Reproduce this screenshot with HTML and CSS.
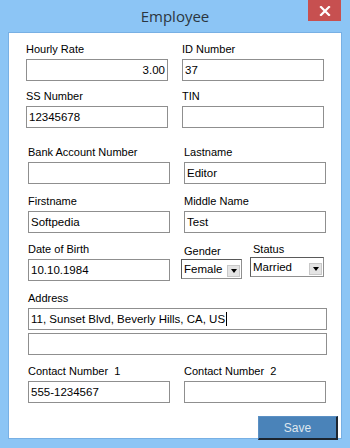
FILE: index.html
```html
<!DOCTYPE html>
<html lang="en">
<head>
    <meta charset="UTF-8">
    <meta name="viewport" content="width=device-width, initial-scale=1.0">
    <title>Employee</title>
    <link rel="stylesheet" href="styles.css">
</head>
<body>

    <div class="window">
        <div class="titlebar">
            <span></span>
            <span class="title">Employee</span>
            <button class="close-btn" aria-label="Close">
                <svg width="12" height="10" viewBox="0 0 12 10">
                    <path d="M2 1 L10 9 M10 1 L2 9" stroke="#fff" stroke-width="2.2" stroke-linecap="square"/>
                </svg>
            </button>
        </div>

        <div class="client">
            <div class="row sec-a r1">
                <div class="field">
                    <label>Hourly Rate</label>
                    <div class="input right">3.00</div>
                </div>
                <div class="field">
                    <label>ID Number</label>
                    <div class="input">37</div>
                </div>
            </div>

            <div class="row sec-a r2">
                <div class="field">
                    <label>SS Number</label>
                    <div class="input">12345678</div>
                </div>
                <div class="field">
                    <label>TIN</label>
                    <div class="input"></div>
                </div>
            </div>

            <div class="row sec-b r3">
                <div class="field">
                    <label>Bank Account Number</label>
                    <div class="input"></div>
                </div>
                <div class="field">
                    <label>Lastname</label>
                    <div class="input">Editor</div>
                </div>
            </div>

            <div class="row sec-b r4">
                <div class="field">
                    <label>Firstname</label>
                    <div class="input">Softpedia</div>
                </div>
                <div class="field">
                    <label>Middle Name</label>
                    <div class="input">Test</div>
                </div>
            </div>

            <div class="row sec-b r5">
                <div class="field">
                    <label>Date of Birth</label>
                    <div class="input">10.10.1984</div>
                </div>
                <div class="combos">
                    <div class="field combo-field gender">
                        <label>Gender</label>
                        <div class="combo"><span>Female</span><i class="arrow"></i></div>
                    </div>
                    <div class="field combo-field status">
                        <label>Status</label>
                        <div class="combo"><span>Married</span><i class="arrow"></i></div>
                    </div>
                </div>
            </div>

            <div class="sec-b address">
                <div class="field">
                    <label>Address</label>
                    <div class="input">11, Sunset Blvd, Beverly Hills, CA, US<span class="caret"></span></div>
                    <div class="input second"></div>
                </div>
            </div>

            <div class="row sec-b r6">
                <div class="field">
                    <label>Contact Number&nbsp; 1</label>
                    <div class="input">555-1234567</div>
                </div>
                <div class="field">
                    <label>Contact Number&nbsp; 2</label>
                    <div class="input"></div>
                </div>
            </div>

            <div class="actions">
                <button class="save-btn">Save</button>
            </div>
        </div>
    </div>

</body>
</html>
```

FILE: styles.css
```css
html, body {
    margin: 0;
    padding: 0;
}
body {
    font-family: "Liberation Sans", Arial, sans-serif;
    background: #8cc5f5;
    width: 350px;
    height: 448px;
    overflow: hidden;
}
.window {
    width: 350px;
    height: 448px;
    background: #8cc5f5;
}
.titlebar {
    height: 32px;
    display: grid;
    grid-template-columns: 1fr auto 1fr;
    align-items: start;
}
.title {
    font-family: "Open Sans", "Noto Sans", sans-serif;
    font-size: 15px;
    color: #2b3640;
    line-height: 20px;
    margin-top: 6px;
}
.close-btn {
    justify-self: end;
    width: 33px;
    height: 21px;
    margin-right: 9px;
    padding: 0;
    border: none;
    background: #c75050;
    display: flex;
    align-items: center;
    justify-content: center;
}
.client {
    margin: 0 8px 0 8px;
    height: 407px;
    box-sizing: border-box;
    background: #fff;
    border: 1px solid #78b0e4;
    padding-top: 9px;
}
.row {
    display: grid;
    grid-template-columns: 142px 142px;
    column-gap: 14px;
}
.sec-a { padding-left: 17px; }
.sec-b { padding-left: 19px; }
.field {
    display: flex;
    flex-direction: column;
}
label {
    font-size: 11px;
    line-height: 14px;
    color: #000;
    padding-left: 0;
    margin-bottom: 3px;
}
.input {
    height: 22px;
    box-sizing: border-box;
    border: 1px solid #8f8f8f;
    background: #fff;
    font-size: 11.5px;
    line-height: 20px;
    padding: 0 2px;
    color: #000;
    white-space: nowrap;
    overflow: hidden;
}
.input.right { text-align: right; }
.r2 { margin-top: 8px; }
.r3 { margin-top: 17px; }
.r4 { margin-top: 10px; }
.r5 { margin-top: 9px; }
.address { margin-top: 10px; }
.address .input { width: 299px; }
.address .second { margin-top: 3px; }
.r6 { margin-top: 9px; }

.combos {
    display: flex;
    gap: 8px;
    margin-left: -3px;
    margin-top: 2px;
}
.combo-field label {
    padding-left: 3px;
    margin-bottom: 1px;
}
.combo {
    height: 20px;
    box-sizing: border-box;
    border: 1px solid #8f8f8f;
    border-top-color: #5a5a5a;
    border-left-color: #5a5a5a;
    display: flex;
    align-items: flex-end;
    justify-content: space-between;
    padding: 0 1px 1px 2px;
    font-size: 11.5px;
}
.combo span {
    line-height: 16px;
    align-self: center;
}
.gender .combo { width: 61px; }
.status { margin-top: -2px; }
.status .combo { width: 74px; }
.arrow {
    width: 13px;
    height: 12px;
    background: #e4e4e4;
    border: 1px solid #c8c8c8;
    box-sizing: border-box;
    display: flex;
    align-items: center;
    justify-content: center;
}
.arrow::after {
    content: "";
    border-left: 3.5px solid transparent;
    border-right: 3.5px solid transparent;
    border-top: 4px solid #000;
}
.caret {
    display: inline-block;
    width: 1px;
    height: 14px;
    background: #000;
    vertical-align: -3px;
    margin-left: 1px;
}
.actions {
    display: flex;
    justify-content: flex-end;
    margin-top: 13px;
    padding-right: 3px;
}
.save-btn {
    width: 80px;
    height: 24px;
    box-sizing: border-box;
    background: #4a83b9;
    border: 1px solid #5b90c4;
    border-right: 2px solid #1c2530;
    border-bottom: 2px solid #1c2530;
    color: #dfe6ee;
    font-family: "Liberation Sans", Arial, sans-serif;
    font-size: 12px;
    font-weight: normal;
    padding: 0;
}
```
